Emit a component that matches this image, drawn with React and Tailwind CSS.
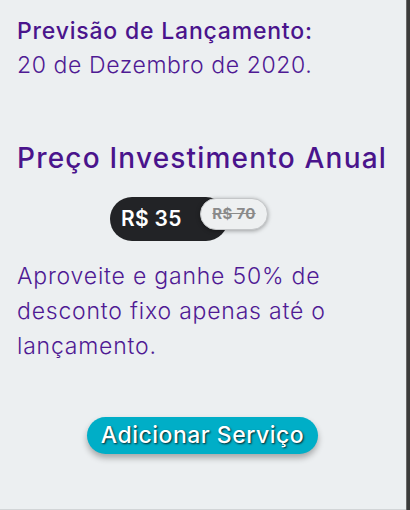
export default function App() {
  const font = { fontFamily: "Inter, 'Liberation Sans', sans-serif" };
  return (
    <div className="flex w-[410px] h-[510px] bg-[#eceff1]" style={font}>
      <div className="flex-1 flex flex-col border-b border-[#d2d5d7] h-[510px]">
        <div className="pl-[17px] pt-[14px] text-[#4a148c]">
          <div className="text-[23px] leading-[34px] font-medium tracking-[0.8px] whitespace-nowrap">Previsão de Lançamento:</div>
          <div className="text-[23px] leading-[34px] font-light text-[#4f1a94] tracking-[0.6px] whitespace-nowrap">20 de Dezembro de 2020.</div>
          <div className="mt-[56px] text-[28px] leading-[40px] font-medium tracking-[1.2px] whitespace-nowrap">Preço Investimento Anual</div>
          <div className="mt-[19px] ml-[93px] flex items-start">
            <div className="h-[44px] w-[118px] rounded-full bg-[#222326] flex items-center pl-[11px] text-white text-[21px] font-semibold tracking-[0.3px]">
              R$ 35
            </div>
            <div className="-ml-[28px] mt-[1px] h-[32px] w-[68px] rounded-full bg-[#eef0f1] border border-[#c4c6c8] shadow-[0_1px_4px_rgba(0,0,0,0.35)] flex items-center justify-center text-[15px] font-bold text-[#8a8a8a] line-through tracking-[0.3px]">
              R$ 70
            </div>
          </div>
          <div className="mt-[18px] text-[23px] leading-[35px] font-light text-[#4f1a94] tracking-[0.8px] whitespace-nowrap">
            Aproveite e ganhe 50% de<br />desconto fixo apenas até o<br />lançamento.
          </div>
          <div className="mt-[53px] ml-[70px] h-[37px] w-[231px] rounded-full bg-[#00aec7] shadow-[0_4px_6px_rgba(0,0,0,0.3)] flex items-center justify-center text-white text-[23px] font-medium tracking-[0.5px] whitespace-nowrap [text-shadow:1px_1px_2px_rgba(0,0,0,0.8)]">
            Adicionar Serviço
          </div>
        </div>
      </div>
      <div className="w-[4px] h-[510px] bg-[#3a3a3a] border-l border-[#6a6a6a]"></div>
    </div>
  );
}
